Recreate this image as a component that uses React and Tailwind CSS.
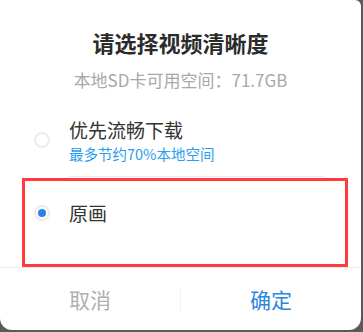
import React from 'react';

// Quality picker dialog: storage hint, two radio options, cancel / confirm

const font = { fontFamily: '"Noto Sans CJK SC", "Noto Sans", sans-serif' };

function Radio({ checked }) {
  return (
    <span className="flex h-4 w-4 shrink-0 items-center justify-center rounded-full border-2 border-[#ececec] bg-white">
      {checked && <span className="h-[8px] w-[8px] rounded-full bg-[#2f80ed]" />}
    </span>
  );
}

export default function App() {
  return (
    <div className="h-[332px] w-[363px] overflow-hidden bg-[#5a5a5a]" style={font}>
      <div className="relative flex h-[330px] w-[361px] flex-col rounded-b-[12px] rounded-tr-[6px] bg-white">
        <div className="pt-[27px] text-center text-[22px] font-bold leading-[30px] text-[#2b2b2b]">
          请选择视频清晰度
        </div>
        <div className="mt-[13px] text-center text-[17px] leading-[20px] text-[#a8a8a8]">
          本地SD卡可用空间：71.7GB
        </div>

        <div className="mt-[27px] flex items-center pl-[34px]">
          <Radio />
          <div className="ml-[19px] flex flex-col">
            <span className="text-[19px] leading-[26px] text-[#333]">优先流畅下载</span>
            <span className="mt-[2px] text-[14.5px] leading-[18px] text-[#2a9eee]">最多节约70%本地空间</span>
          </div>
        </div>
        <div className="ml-[69px] mr-[36px] mt-[13px] h-px bg-[#ededed]" />

        <div className="flex h-[90px] items-start pl-[34px] pt-[23px]">
          <div className="flex h-[26px] items-center">
            <Radio checked />
          </div>
          <span className="ml-[19px] text-[19px] leading-[26px] text-[#333]">原画</span>
        </div>
        <div className="h-px bg-[#ececec]" />

        <div className="flex flex-1 items-center">
          <button className="flex-1 text-[21px] leading-[30px] text-[#b0b0b0]">取消</button>
          <span className="h-[22px] w-px bg-[#f0f0f0]" />
          <button className="flex-1 text-[21px] leading-[30px] text-[#2d86e0]">确定</button>
        </div>

        <div className="pointer-events-none absolute left-[22px] top-[178px] h-[89px] w-[326px] border-[3px] border-[#ff3b3b]" />
      </div>
    </div>
  );
}
